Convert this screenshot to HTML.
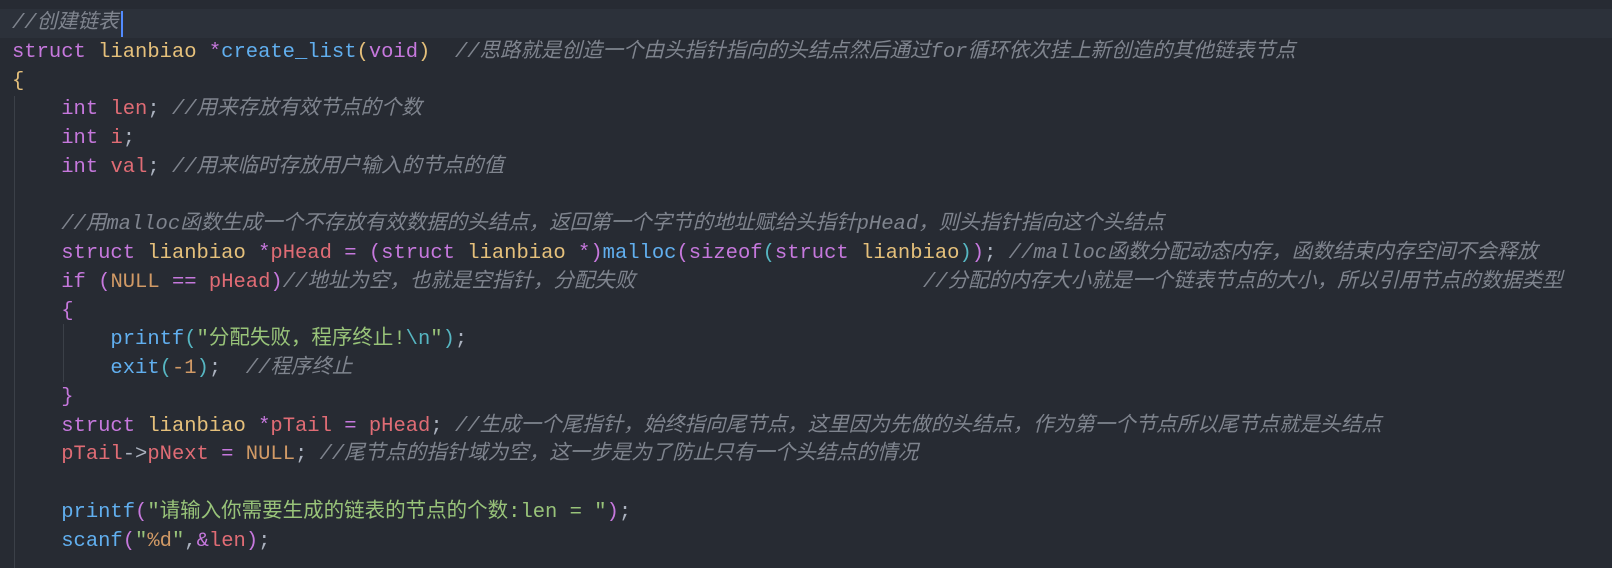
<!DOCTYPE html>
<html><head><meta charset="utf-8"><style>
html,body{margin:0;padding:0;}
body{width:1612px;height:568px;background:#272b33;overflow:hidden;position:relative;
font-family:"Liberation Mono","Noto Sans CJK SC",monospace;font-size:20.5px;color:#abb2bf;}
.cl{position:absolute;left:0;top:9px;width:1612px;height:29px;background:#2c313a;}
.code{position:absolute;left:12px;top:10px;}
.l{height:28.75px;line-height:28.75px;white-space:pre;position:relative;}
.k{color:#c678dd}.t{color:#e5c07b}.f{color:#61afef}.v{color:#e06c75}.s{color:#98c379}
.n{color:#d19a66}.c{color:#7f848e;font-style:italic}
.b1{color:#e5c07b}.b2{color:#c678dd}.b3{color:#56b6c2}
.g{position:absolute;width:1px;background:#3b4048;}
.cur{position:absolute;left:121px;top:11px;width:2px;height:26px;background:#528bff;}
</style></head><body>
<div class="cl"></div>
<div class="g" style="left:14px;top:96px;height:472px"></div>
<div class="g" style="left:63px;top:324px;height:58px"></div>
<div class="cur"></div>
<div class="code">
<div class="l"><span class="c">//创建链表</span></div>
<div class="l"><span class="k">struct</span> <span class="t">lianbiao</span> <span class="k">*</span><span class="f">create_list</span><span class="b1">(</span><span class="k">void</span><span class="b1">)</span>  <span class="c">//思路就是创造一个由头指针指向的头结点然后通过for循环依次挂上新创造的其他链表节点</span></div>
<div class="l"><span class="b1">{</span></div>
<div class="l">    <span class="k">int</span> <span class="v">len</span>; <span class="c">//用来存放有效节点的个数</span></div>
<div class="l">    <span class="k">int</span> <span class="v">i</span>;</div>
<div class="l">    <span class="k">int</span> <span class="v">val</span>; <span class="c">//用来临时存放用户输入的节点的值</span></div>
<div class="l"> </div>
<div class="l">    <span class="c">//用malloc函数生成一个不存放有效数据的头结点，返回第一个字节的地址赋给头指针pHead，则头指针指向这个头结点</span></div>
<div class="l">    <span class="k">struct</span> <span class="t">lianbiao</span> <span class="k">*</span><span class="v">pHead</span> <span class="k">=</span> <span class="b2">(</span><span class="k">struct</span> <span class="t">lianbiao</span> <span class="k">*</span><span class="b2">)</span><span class="f">malloc</span><span class="b2">(</span><span class="k">sizeof</span><span class="b3">(</span><span class="k">struct</span> <span class="t">lianbiao</span><span class="b3">)</span><span class="b2">)</span>; <span class="c">//malloc函数分配动态内存，函数结束内存空间不会释放</span></div>
<div class="l">    <span class="k">if</span> <span class="b2">(</span><span class="n">NULL</span> <span class="k">==</span> <span class="v">pHead</span><span class="b2">)</span><span class="c">//地址为空，也就是空指针，分配失败</span><span class="c" style="position:absolute;left:911px">//分配的内存大小就是一个链表节点的大小，所以引用节点的数据类型</span></div>
<div class="l">    <span class="b2">{</span></div>
<div class="l">        <span class="f">printf</span><span class="b3">(</span><span class="s">"分配失败，程序终止!</span><span class="b3">\n</span><span class="s">"</span><span class="b3">)</span>;</div>
<div class="l">        <span class="f">exit</span><span class="b3">(</span><span class="n">-1</span><span class="b3">)</span>;  <span class="c">//程序终止</span></div>
<div class="l">    <span class="b2">}</span></div>
<div class="l">    <span class="k">struct</span> <span class="t">lianbiao</span> <span class="k">*</span><span class="v">pTail</span> <span class="k">=</span> <span class="v">pHead</span>; <span class="c">//生成一个尾指针，始终指向尾节点，这里因为先做的头结点，作为第一个节点所以尾节点就是头结点</span></div>
<div class="l">    <span class="v">pTail</span>-&gt;<span class="v">pNext</span> <span class="k">=</span> <span class="n">NULL</span>; <span class="c">//尾节点的指针域为空，这一步是为了防止只有一个头结点的情况</span></div>
<div class="l"> </div>
<div class="l">    <span class="f">printf</span><span class="b2">(</span><span class="s">"请输入你需要生成的链表的节点的个数:len = "</span><span class="b2">)</span>;</div>
<div class="l">    <span class="f">scanf</span><span class="b2">(</span><span class="s">"</span><span class="n">%d</span><span class="s">"</span>,<span class="k">&amp;</span><span class="v">len</span><span class="b2">)</span>;</div>
</div>
</body></html>
